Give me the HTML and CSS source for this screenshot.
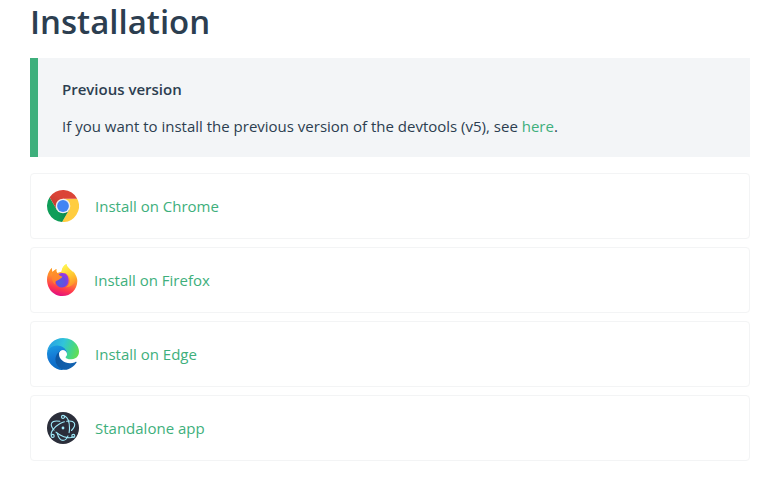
FILE: index.html
```html
<!DOCTYPE html>
<html lang="en">
<head>
<meta charset="utf-8">
<meta name="viewport" content="width=device-width, initial-scale=1">
<title>Installation</title>
<link rel="stylesheet" href="styles.css">
</head>
<body>
<main class="content">
  <h1 class="title">Installation</h1>
  <section class="notice">
    <p class="notice-title">Previous version</p>
    <p class="notice-text">If you want to install the previous version of the devtools (v5), see <a class="link" href="#previous">here</a>.</p>
  </section>
  <nav class="options">
    <a class="option" href="#chrome">
      <svg class="icon" viewBox="0 0 32 32" aria-hidden="true">
        <defs>
          <linearGradient id="c-red" x1="0" y1="1" x2="1" y2="0"><stop offset="0" stop-color="#b8382e"/><stop offset=".5" stop-color="#db4437"/></linearGradient>
          <linearGradient id="c-green" x1="0" y1="0" x2="1" y2="0"><stop offset=".5" stop-color="#0f9d58"/><stop offset="1" stop-color="#0b8048"/></linearGradient>
        </defs>
        <path d="M16 8.700H30.200A16 16 0 0 1 15.100 32L22.300 19.600z" fill="#ffcd40"/>
        <path d="M2.600 7.300A16 16 0 0 0 15.100 32L22.300 19.600 16 16 9.700 19.600z" fill="url(#c-green)"/>
        <path d="M2.600 7.300A16 16 0 0 1 30.200 8.700H16L9.700 19.600z" fill="url(#c-red)"/>
        <circle cx="16" cy="16" r="7.300" fill="#f1f1f1"/>
        <circle cx="16" cy="16" r="5.900" fill="#4285f4"/>
      </svg>
      <span>Install on Chrome</span>
    </a>
    <a class="option" href="#firefox">
      <svg class="icon icon-narrow" viewBox="0 0 31 32" aria-hidden="true">
        <defs>
          <linearGradient id="f-body" x1=".7" y1=".1" x2=".45" y2="1"><stop offset="0" stop-color="#fff044"/><stop offset=".3" stop-color="#ffa52b"/><stop offset=".55" stop-color="#ff7139"/><stop offset=".78" stop-color="#ff364f"/><stop offset="1" stop-color="#e3117f"/></linearGradient>
          <linearGradient id="f-flame" x1=".4" y1="0" x2=".7" y2="1"><stop offset="0" stop-color="#fff44f"/><stop offset=".5" stop-color="#ffc830"/><stop offset="1" stop-color="#ff8a28"/></linearGradient>
          <radialGradient id="f-globe" cx=".4" cy=".65" r=".7"><stop offset="0" stop-color="#5460dc"/><stop offset=".55" stop-color="#6b48e2"/><stop offset="1" stop-color="#a833e1"/></radialGradient>
          <linearGradient id="f-fox" x1="0" y1="0" x2="0" y2="1"><stop offset="0" stop-color="#ff9828"/><stop offset="1" stop-color="#ff7a30"/></linearGradient>
        </defs>
        <path d="M28.700 11.200c-.7-1.600-2-3.400-3.100-3.900.9 1.800 1.400 3.500 1.600 4.800C25.400 7.700 20.300 4.700 19.300 0c-3.400 2-4.500 5.600-4.700 7.800-1.600.1-3 .6-4.200 1.300C9.200 8.100 9.100 6.300 9.500 5c-1.700.8-2.900 2-3.900 3.100-.7-.8-.6-3.600-.6-4.100C3.200 5.300 1.500 8.400.8 10.400-.6 14.600 0 19.400 1.400 22.700 3.800 28.500 9.400 32 15.400 32 23.900 32 30.100 25.500 30.300 17.200c.1-2.500-.8-4.600-1.600-6z" fill="url(#f-body)"/>
        <path d="M19.300 0c-4 2.400-5 6.700-4.500 8.800 4.700-.4 8.300 3.300 8.200 7.700-.1 3.400-2 5.500-4.200 7 5.300-.6 9.500-4 9.900-8.700.3-3-1.200-5.300-3.700-7.800-2.300-2.200-4.800-3.800-5.700-7z" fill="url(#f-flame)"/>
        <path d="M11 10.400C12.500 9 16 8.300 18.400 9.600c2.200 1.300 3.200 3.700 3.200 6.900a6.600 6.600 0 1 1-13.200.9z" fill="url(#f-globe)"/>
        <path d="M.8 13.400C1.900 11.400 3.500 10.100 5.600 8.600 4.900 7.400 5 5 5 4 3.200 5.700 2 8 1.600 9.800zM5.600 8.100C6.600 7 7.800 5.800 9.500 5c-.4 1.300-.3 3.100.9 4.100 1.300.6 1.700 3.100 5 3.500-.3 1.500-2 2-3.300 2.900-.8 1-2.900 1-3.600 2-.8 1-.7 2.200-.1 3.200C5.700 19.100 4.200 15.500 5.600 8.100z" fill="url(#f-fox)"/>
      </svg>
      <span>Install on Firefox</span>
    </a>
    <a class="option" href="#edge">
      <svg class="icon" viewBox="0 0 256 256" aria-hidden="true">
        <defs>
          <linearGradient id="e-top" x1="0" y1=".4" x2="1" y2=".65"><stop offset="0" stop-color="#299fe3"/><stop offset=".45" stop-color="#31c4da"/><stop offset=".75" stop-color="#43d68c"/><stop offset="1" stop-color="#66de50"/></linearGradient>
          <linearGradient id="e-left" x1=".3" y1="0" x2=".5" y2="1"><stop offset="0" stop-color="#1b9de2"/><stop offset=".5" stop-color="#1478d4"/><stop offset="1" stop-color="#0868bf"/></linearGradient>
          <linearGradient id="e-low" x1="0" y1="0" x2="1" y2=".3"><stop offset="0" stop-color="#0c559f"/><stop offset="1" stop-color="#1262b0"/></linearGradient>
        </defs>
        <path d="M231 190.500c-3.400 1.800-6.900 3.400-10.500 4.700a101.900 101.900 0 0 1-35.900 6.500c-47.300 0-88.500-32.500-88.500-74.300.1-11.400 6.400-21.900 16.400-27.300-42.800 1.800-53.800 46.400-53.800 72.500 0 73.900 68.100 81.400 82.800 81.400 7.900 0 19.800-2.300 27-4.600l1.300-.4a128.300 128.300 0 0 0 66.600-52.800 4 4 0 0 0-5.400-5.700z" fill="url(#e-low)"/>
        <path d="M105.700 241.400a79.200 79.200 0 0 1-22.700-21.300 80.700 80.700 0 0 1 29.500-120c3.200-1.500 8.500-4.100 15.600-4a32.400 32.400 0 0 1 25.700 13 31.900 31.900 0 0 1 6.300 18.700c0-.2 24.500-79.600-80-79.600-43.900 0-80 41.700-80 78.200a130.200 130.200 0 0 0 12.100 56 128 128 0 0 0 156.400 67 75.500 75.500 0 0 1-62.900-8z" fill="url(#e-left)"/>
        <path d="M152.300 148.900c-.9 1-3.400 2.500-3.400 5.600 0 2.600 1.700 5.200 4.800 7.300 14.300 10 41.400 8.600 41.500 8.600a59.600 59.600 0 0 0 30.300-8.300A61.400 61.400 0 0 0 256 109c.3-22.400-8-37.300-11.300-43.900C223.500 23.600 177.700 0 128 0A128 128 0 0 0 0 126.200c.5-36.500 36.800-66 80-66 3.500 0 23.500.3 42 10a72.600 72.600 0 0 1 30.900 29.300c6.100 10.600 7.200 24.100 7.200 29.500s-2.700 13.300-7.800 19.900z" fill="url(#e-top)"/>
      </svg>
      <span>Install on Edge</span>
    </a>
    <a class="option" href="#standalone">
      <svg class="icon" viewBox="0 0 32 32" aria-hidden="true">
        <circle cx="16" cy="16" r="16" fill="#2b2e3a"/>
        <g fill="none" stroke="#9feaf9" stroke-width="1.100" stroke-linecap="round">
          <path d="M12.800 9.300C8.800 8.600 5.700 9.200 4.700 11c-1 1.800 0 4.500 2.300 7.100"/>
          <path d="M9 20.100a28 28 0 0 0 3.700 2.600c5.600 3.200 11.200 4 13.500 1.900"/>
          <path d="M24.500 18.500c2.700-2.800 3.800-5.600 2.800-7.500-1-1.700-3.900-2.300-7.600-1.700"/>
          <path d="M17.400 9.800c-1.500.3-3.100 1-4.700 1.900-6 3.500-9.600 8.700-8.300 11.900"/>
          <path d="M10.300 21.400C11.400 25.600 13.600 28.400 16 28.400c2 0 3.800-1.700 5-4.500"/>
          <path d="M22.100 20.600c.3-1.500.4-3 .4-4.600 0-5.800-2-10.800-4.800-12.100"/>
          <circle cx="16" cy="4.900" r="1.500"/>
          <circle cx="5.700" cy="23.900" r="1.500"/>
          <circle cx="26.300" cy="23.900" r="1.500"/>
        </g>
        <circle cx="16" cy="16" r="1.400" fill="#9feaf9"/>
      </svg>
      <span>Standalone app</span>
    </a>
  </nav>
</main>
</body>
</html>
```
FILE: styles.css
```css
* {
  box-sizing: border-box;
}

body {
  margin: 0;
  background: #fff;
  color: #2c3e50;
  font-family: "Segoe UI", "Open Sans", "Noto Sans", sans-serif;
  font-size: 15px;
  line-height: 27px;
}

.content {
  padding: 0 26px 28px 30px;
}

.title {
  margin: 0 0 14px;
  font-size: 33px;
  font-weight: 600;
  line-height: 44px;
}

.notice {
  margin-bottom: 16px;
  padding: 18px 24px 17px;
  border-left: 8px solid #3eaf7c;
  background: #f3f5f7;
}

.notice-title,
.notice-text {
  margin: 0;
}

.notice-title {
  margin-bottom: 10px;
  font-weight: 600;
}

.link,
.option {
  color: #3eaf7c;
  text-decoration: none;
}

.options {
  display: grid;
  gap: 8px;
}

.option {
  display: flex;
  align-items: center;
  gap: 16px;
  padding: 16px;
  border: 1px solid #f3f4f5;
  border-radius: 4px;
}

.icon {
  width: 32px;
  height: 32px;
}

.icon-narrow {
  width: 31px;
}
```
